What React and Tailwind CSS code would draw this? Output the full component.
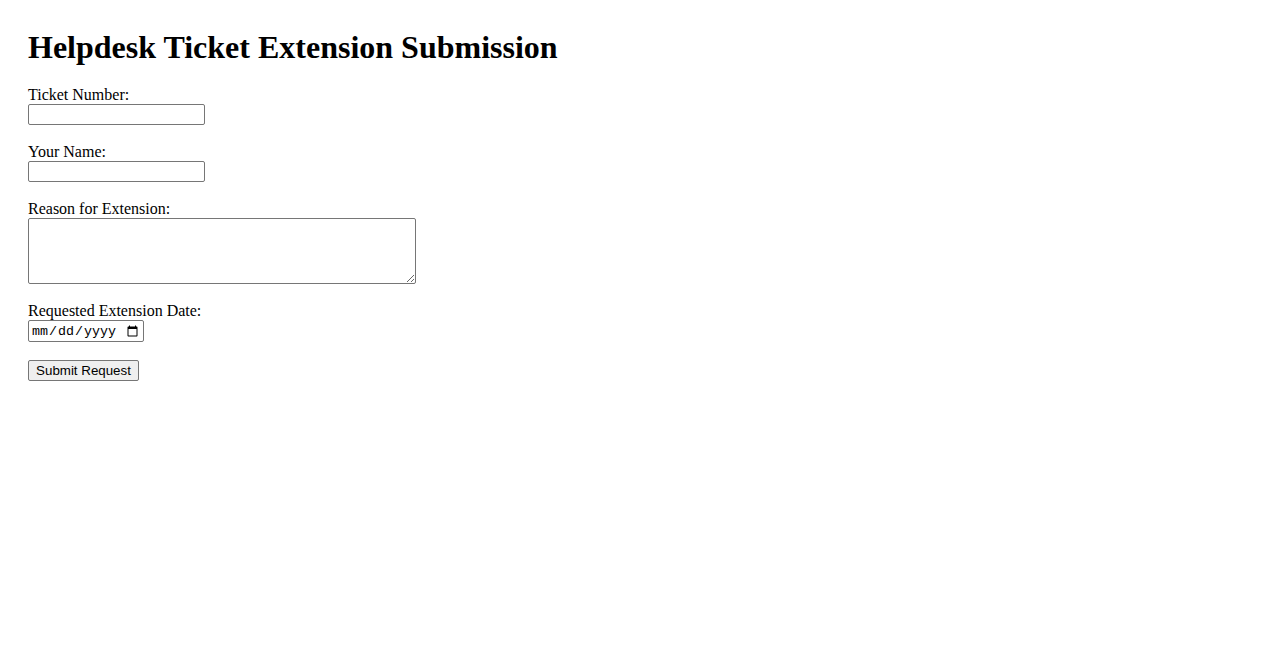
import React from 'react';

const inputCls =
  "block w-[177px] h-[21px] border border-[#767676] rounded-[2px] bg-white px-[2px] text-[13.33px] font-['Liberation_Sans',Arial,sans-serif] outline-none";

const Field = ({ label, children, className = 'mb-[18px]' }) => (
  <div className={className}>
    <label className="block leading-[18px]">{label}</label>
    {children}
  </div>
);

export default function App() {
  return (
    <div className="min-h-screen bg-white text-black font-['Liberation_Serif','Times_New_Roman',serif] text-[16px] pl-[28px] pt-[29px]">
      <h1 className="text-[32px] font-bold leading-[37px] mb-[20px]">Helpdesk Ticket Extension Submission</h1>
      <form onSubmit={e => e.preventDefault()}>
        <Field label="Ticket Number:">
          <input type="text" className={inputCls} />
        </Field>
        <Field label="Your Name:">
          <input type="text" className={inputCls} />
        </Field>
        <Field label="Reason for Extension:">
          <textarea className="block w-[388px] h-[66px] border border-[#767676] rounded-[2px] bg-white p-[2px] text-[13.33px] font-['Liberation_Mono',monospace] outline-none" />
        </Field>
        <Field label="Requested Extension Date:">
          <input
            type="date"
            className="block w-[116px] h-[22px] border border-[#767676] rounded-[2px] bg-white px-[2px] pt-[2px] text-[13.33px] font-['Liberation_Mono',monospace] outline-none"
          />
        </Field>
        <button
          type="submit"
          className="block w-[111px] h-[21px] border border-[#767676] rounded-[2px] bg-[#efefef] px-[6px] text-[13.33px] leading-none font-['Liberation_Sans',Arial,sans-serif]"
        >
          Submit Request
        </button>
      </form>
    </div>
  );
}
